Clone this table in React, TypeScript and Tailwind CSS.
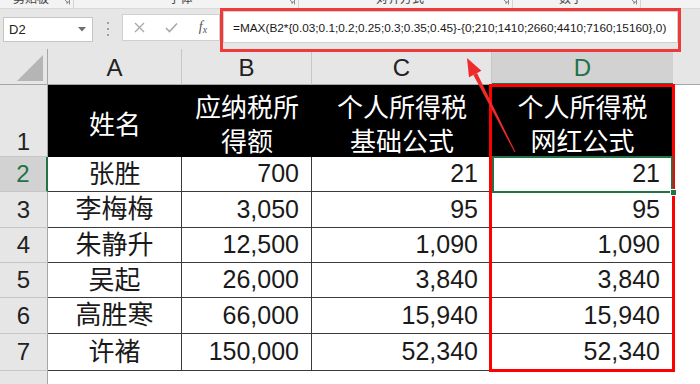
import React from 'react';

const rows = [
  ['张胜', '700', '21', '21'],
  ['李梅梅', '3,050', '95', '95'],
  ['朱静升', '12,500', '1,090', '1,090'],
  ['吴起', '26,000', '3,840', '3,840'],
  ['高胜寒', '66,000', '15,940', '15,940'],
  ['许褚', '150,000', '52,340', '52,340'],
];

const groups = [
  { w: 'w-[74px]', label: '剪贴板' },
  { w: 'w-[225px]', label: '字体' },
  { w: 'w-[214px]', label: '对齐方式' },
  { w: 'w-[128px]', label: '数字' },
];

function Launcher() {
  return (
    <svg width="8" height="8" viewBox="0 0 8 8" className="mr-[3px] -mt-[3px] shrink-0">
      <path d="M0.5 0.5 H7.5 V7.5" fill="none" stroke="#8a8a8a" strokeWidth="1" />
      <path d="M2 2 L6 6 M4 6 H6 V4" fill="none" stroke="#8a8a8a" strokeWidth="1" />
    </svg>
  );
}

export default function App() {
  return (
    <div className="relative w-[700px] h-[384px] overflow-hidden bg-[#e6e6e6] font-['Liberation_Sans','Noto_Sans_CJK_SC',sans-serif] text-[#1a1a1a]">
      {/* ribbon bottom strip */}
      <div className="flex h-[8px] bg-[#f3f3f3] overflow-hidden text-[12px] leading-[14px] text-[#444]">
        {groups.map((g) => (
          <div key={g.label} className={`${g.w} flex items-start border-r border-[#d4d4d4]`}>
            <div className="flex-1 text-center -mt-[8px]">{g.label}</div>
            <Launcher />
          </div>
        ))}
        <div className="flex-1" />
      </div>

      {/* formula bar */}
      <div className="flex h-[41px] items-start border-t border-[#d9d9d9]">
        <div className="ml-[3px] mt-[8px] w-[90px] h-[25px] bg-white border border-[#c6c6c6] flex items-center pl-[5px] text-[13px] text-[#222]">
          <span className="flex-1">D2</span>
          <svg width="8" height="5" viewBox="0 0 8 5" className="mr-[6px]">
            <path d="M0 0 H8 L4 4.5 Z" fill="#6e6e6e" />
          </svg>
        </div>
        <div className="w-[29px] flex flex-col items-center gap-[4px] mt-[13px]">
          <div className="w-[2px] h-[2px] bg-[#a0a0a0]" />
          <div className="w-[2px] h-[2px] bg-[#a0a0a0]" />
          <div className="w-[2px] h-[2px] bg-[#a0a0a0]" />
        </div>
        <div className="mt-[5px] w-[98px] h-[27px] bg-white border border-[#d0d0d0] flex items-center">
          <div className="w-[33px] flex justify-center">
            <svg width="11" height="11" viewBox="0 0 11 11">
              <path d="M1 1 L10 10 M10 1 L1 10" stroke="#a8a8a8" strokeWidth="1.3" />
            </svg>
          </div>
          <div className="w-[33px] flex justify-center">
            <svg width="13" height="11" viewBox="0 0 13 11">
              <path d="M1 6 L4.5 9.5 L12 1.5" fill="none" stroke="#a8a8a8" strokeWidth="1.6" />
            </svg>
          </div>
          <div className="w-[33px] flex justify-center">
            <span className="font-['Liberation_Serif',serif] italic text-[14px] text-[#555] leading-none">
              f<span className="text-[10px] align-[-2px]">x</span>
            </span>
          </div>
        </div>
        <div className="ml-[3px] mt-[2px] w-[455px] h-[32px] bg-white border border-[#d0d0d0] flex items-center pl-[9px] pt-[4px] text-[11.8px] text-[#1a1a1a] whitespace-nowrap">
          =MAX(B2*{'{'}0.03;0.1;0.2;0.25;0.3;0.35;0.45{'}'}-{'{'}0;210;1410;2660;4410;7160;15160{'}'},0)
        </div>
      </div>

      {/* sheet grid */}
      <div className="grid grid-cols-[48px_134px_130px_180px_181px_27px] grid-rows-[36px_72px_35px_36px_35px_35px_36px_37px_13px]">
        {/* column headers */}
        <div className="relative bg-[#e6e6e6] border-r border-b border-[#a6a6a6] flex items-end justify-end pr-[4px] pb-[3px]">
          <svg width="26" height="26" viewBox="0 0 26 26">
            <path d="M26 0 L26 26 L0 26 Z" fill="#b5b5b5" />
          </svg>
        </div>
        {['A', 'B', 'C'].map((c) => (
          <div key={c} className="bg-[#e6e6e6] border-r border-[#c6c6c6] border-b border-b-[#a6a6a6] flex items-center justify-center text-[24px] text-[#222] pt-[2px]">
            {c}
          </div>
        ))}
        <div className="bg-[#d2d2d2] border-b-2 border-[#217346] flex items-center justify-center text-[24px] text-[#217346] pt-[3px]">
          D
        </div>
        <div className="bg-[#e6e6e6] border-b border-[#a6a6a6]" />

        {/* row 1 */}
        <div className="bg-[#e6e6e6] border-r border-[#a6a6a6] border-b border-b-[#c6c6c6] flex items-end justify-center pb-[2px] text-[24px] leading-[24px] text-[#222]">
          1
        </div>
        <div className="bg-black text-white flex items-center justify-center text-[26px] leading-[34px] pt-[8px]">
          姓名
        </div>
        <div className="bg-black text-white flex flex-col items-center justify-center text-[26px] leading-[34px] pt-[8px]">
          <span>应纳税所</span>
          <span>得额</span>
        </div>
        <div className="bg-black text-white flex flex-col items-center justify-center text-[26px] leading-[34px] pt-[8px]">
          <span>个人所得税</span>
          <span>基础公式</span>
        </div>
        <div className="bg-black text-white flex flex-col items-center justify-center text-[26px] leading-[34px] pt-[8px]">
          <span>个人所得税</span>
          <span>网红公式</span>
        </div>
        <div className="bg-white" />

        {rows.map((r, i) => {
          const sel = i === 0;
          return (
            <React.Fragment key={r[0]}>
              <div
                className={
                  sel
                    ? 'bg-[#d2d2d2] border-r-2 border-r-[#217346] border-b border-b-[#c6c6c6] flex items-center justify-center text-[24px] text-[#217346]'
                    : 'bg-[#e6e6e6] border-r border-r-[#a6a6a6] border-b border-b-[#c6c6c6] flex items-center justify-center text-[24px] text-[#222]'
                }
              >
                {i + 2}
              </div>
              <div className="bg-white border-r border-b border-[#3a3a3a] flex items-center justify-center text-[26px]">
                {r[0]}
              </div>
              <div className="bg-white border-r border-b border-[#3a3a3a] flex items-center justify-end pr-[12px] text-[25px]">
                {r[1]}
              </div>
              <div className="bg-white border-r border-b border-[#3a3a3a] flex items-center justify-end pr-[13px] text-[25px]">
                {r[2]}
              </div>
              <div className="bg-white border-r border-b border-[#3a3a3a] flex items-center justify-end pr-[12px] text-[25px]">
                {r[3]}
              </div>
              <div className="bg-white" />
            </React.Fragment>
          );
        })}

        {/* row 8 partial */}
        <div className="bg-[#e6e6e6] border-r border-[#a6a6a6]" />
        <div className="bg-white" />
        <div className="bg-white" />
        <div className="bg-white" />
        <div className="bg-white" />
        <div className="bg-white" />
      </div>

      {/* red box around formula */}
      <div className="absolute left-[220px] top-[8px] w-[461px] h-[44px] border-[3px] border-[#f03a3a] pointer-events-none" />

      {/* red box around column D */}
      <div className="absolute left-[489px] top-[84px] w-[186px] h-[288px] border-[3px] border-[#ff0000] pointer-events-none" />

      {/* selection D2 */}
      <div className="absolute left-[492px] top-[156px] w-[181px] h-[37px] border-2 border-[#217346] pointer-events-none" />
      <div className="absolute left-[670px] top-[189px] w-[7px] h-[7px] bg-[#217346] border border-white pointer-events-none" />

      {/* arrow */}
      <svg className="absolute left-0 top-0 pointer-events-none" width="700" height="384" viewBox="0 0 700 384">
        <polygon points="473.4,74.9 477.0,73.1 515.5,152 514.5,152.3" fill="#ee2a2a" />
        <polygon points="467,58 481.4,70.8 469,77.2" fill="#ee2a2a" />
      </svg>
    </div>
  );
}
